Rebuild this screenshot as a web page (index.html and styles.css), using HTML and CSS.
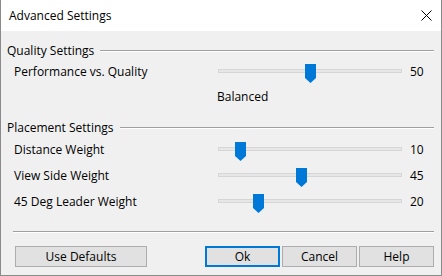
FILE: index.html
```html
<!DOCTYPE html>
<html lang="en">
<head>
  <meta charset="UTF-8" />
  <title>Advanced Settings</title>
  <link rel="stylesheet" href="styles.css">
</head>
<body>
  <div class="window">
    <div class="titlebar">
      <span class="title">Advanced Settings</span>
      <svg class="close" width="11" height="11" viewBox="0 0 11 11">
        <path d="M0.5 0.5L10.5 10.5M10.5 0.5L0.5 10.5" stroke="#000" stroke-width="1" fill="none"/>
      </svg>
    </div>

    <div class="content">
      <div class="group-head first"><span>Quality Settings</span><div class="rule"></div></div>

      <div class="row perf">
        <span class="label">Performance vs. Quality</span>
        <div class="slider">
          <div class="track"></div>
          <svg class="thumb" style="left: 87px" width="11" height="19" viewBox="0 0 11 19"><path d="M0 0H11V14L5.5 19L0 14Z" fill="#0078d7"/></svg>
        </div>
        <span class="value">50</span>
      </div>
      <div class="mode">Balanced</div>

      <div class="group-head second"><span>Placement Settings</span><div class="rule"></div></div>

      <div class="row">
        <span class="label">Distance Weight</span>
        <div class="slider">
          <div class="track"></div>
          <svg class="thumb" style="left: 17px" width="11" height="19" viewBox="0 0 11 19"><path d="M0 0H11V14L5.5 19L0 14Z" fill="#0078d7"/></svg>
        </div>
        <span class="value">10</span>
      </div>
      <div class="row">
        <span class="label">View Side Weight</span>
        <div class="slider">
          <div class="track"></div>
          <svg class="thumb" style="left: 78px" width="11" height="19" viewBox="0 0 11 19"><path d="M0 0H11V14L5.5 19L0 14Z" fill="#0078d7"/></svg>
        </div>
        <span class="value">45</span>
      </div>
      <div class="row">
        <span class="label">45 Deg Leader Weight</span>
        <div class="slider">
          <div class="track"></div>
          <svg class="thumb" style="left: 35px" width="11" height="19" viewBox="0 0 11 19"><path d="M0 0H11V14L5.5 19L0 14Z" fill="#0078d7"/></svg>
        </div>
        <span class="value">20</span>
      </div>

      <div class="separator"></div>

      <div class="buttons">
        <button class="btn wide">Use Defaults</button>
        <div class="spacer"></div>
        <button class="btn default">Ok</button>
        <button class="btn">Cancel</button>
        <button class="btn">Help</button>
      </div>
    </div>
  </div>
</body>
</html>
```

FILE: styles.css
```css
* {
  box-sizing: border-box;
}
body {
  margin: 0;
  font-family: "Open Sans", "Noto Sans", sans-serif;
  font-size: 12px;
  color: #000;
  background: #f0f0f0;
}
.window {
  width: 442px;
  height: 276px;
  background: #f0f0f0;
  border: 1px solid #8a8a8a;
  border-top: none;
  overflow: hidden;
}
.titlebar {
  height: 31px;
  background: #fff;
  display: flex;
  align-items: center;
  justify-content: space-between;
  padding: 0 9px 0 8px;
}
.title {
  font-size: 12px;
  margin-top: -1px;
}
.close {
  margin-top: -1px;
}
.content {
  padding: 0 7px 0 6px;
}
.group-head {
  height: 16px;
  display: flex;
  align-items: center;
}
.group-head.first {
  margin-top: 11px;
}
.group-head.second {
  margin-top: 14px;
}
.group-head span {
  margin-right: 6px;
}
.rule {
  flex: 1;
  border-top: 1px solid #a0a0a0;
  border-bottom: 1px solid #fff;
  margin-top: 1px;
}
.row {
  height: 26px;
  display: flex;
  align-items: center;
}
.row.perf {
  height: 22px;
  margin-top: 2px;
}
.group-head.second + .row {
  margin-top: 1px;
}
.label {
  width: 211px;
  padding-left: 7px;
}
.slider {
  position: relative;
  width: 184px;
  height: 22px;
}
.track {
  position: absolute;
  left: 0;
  right: 0;
  top: 9px;
  height: 4px;
  background: #e7e7e7;
  border: 1px solid #d6d6d6;
}
.thumb {
  position: absolute;
  top: 4px;
}
.value {
  margin-left: 8px;
}
.mode {
  height: 16px;
  line-height: 16px;
  margin-top: 7px;
  padding-left: 210px;
}
.separator {
  margin: 17px 0 0 6px;
  border-top: 1px solid #a0a0a0;
  border-bottom: 1px solid #fff;
}
.buttons {
  display: flex;
  gap: 2px;
  margin-top: 13px;
  padding-left: 8px;
}
.spacer {
  flex: 1;
}
.btn {
  width: 75px;
  height: 21px;
  font-family: inherit;
  font-size: 12px;
  color: #000;
  background: #e1e1e1;
  border: 1px solid #adadad;
  border-radius: 0;
  padding: 0;
}
.btn.wide {
  width: 132px;
}
.btn.default {
  border: 2px solid #0078d7;
}
```
